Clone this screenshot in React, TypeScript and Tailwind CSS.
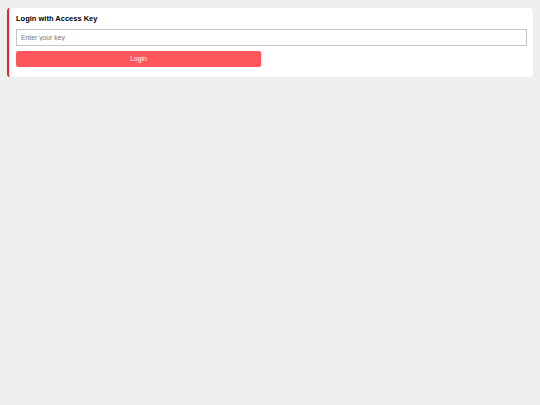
export default function App() {
  return (
    <div className="min-h-screen bg-[#efefef] px-[7px] pt-[8px] font-['Liberation_Sans',Arial,sans-serif]">
      <div className="flex flex-col rounded-[3px] border-l-2 border-[#e2262b] bg-white pb-[10px] pl-[7px] pr-[6px] pt-[6px] shadow-[0_0_1px_rgba(0,0,0,0.06)]">
        <h2 className="mb-[5px] text-[7.5px] font-bold leading-[10px] text-black">Login with Access Key</h2>
        <input
          type="text"
          placeholder="Enter your key"
          className="h-[17px] w-full border border-[#c4c4c4] bg-white px-[4px] text-[6.8px] text-black outline-none placeholder:text-[#777]"
        />
        <button className="mt-[5px] h-[16px] w-[245px] rounded-[2px] bg-[#ff565b] text-[6.8px] text-white">
          Login
        </button>
      </div>
    </div>
  );
}
